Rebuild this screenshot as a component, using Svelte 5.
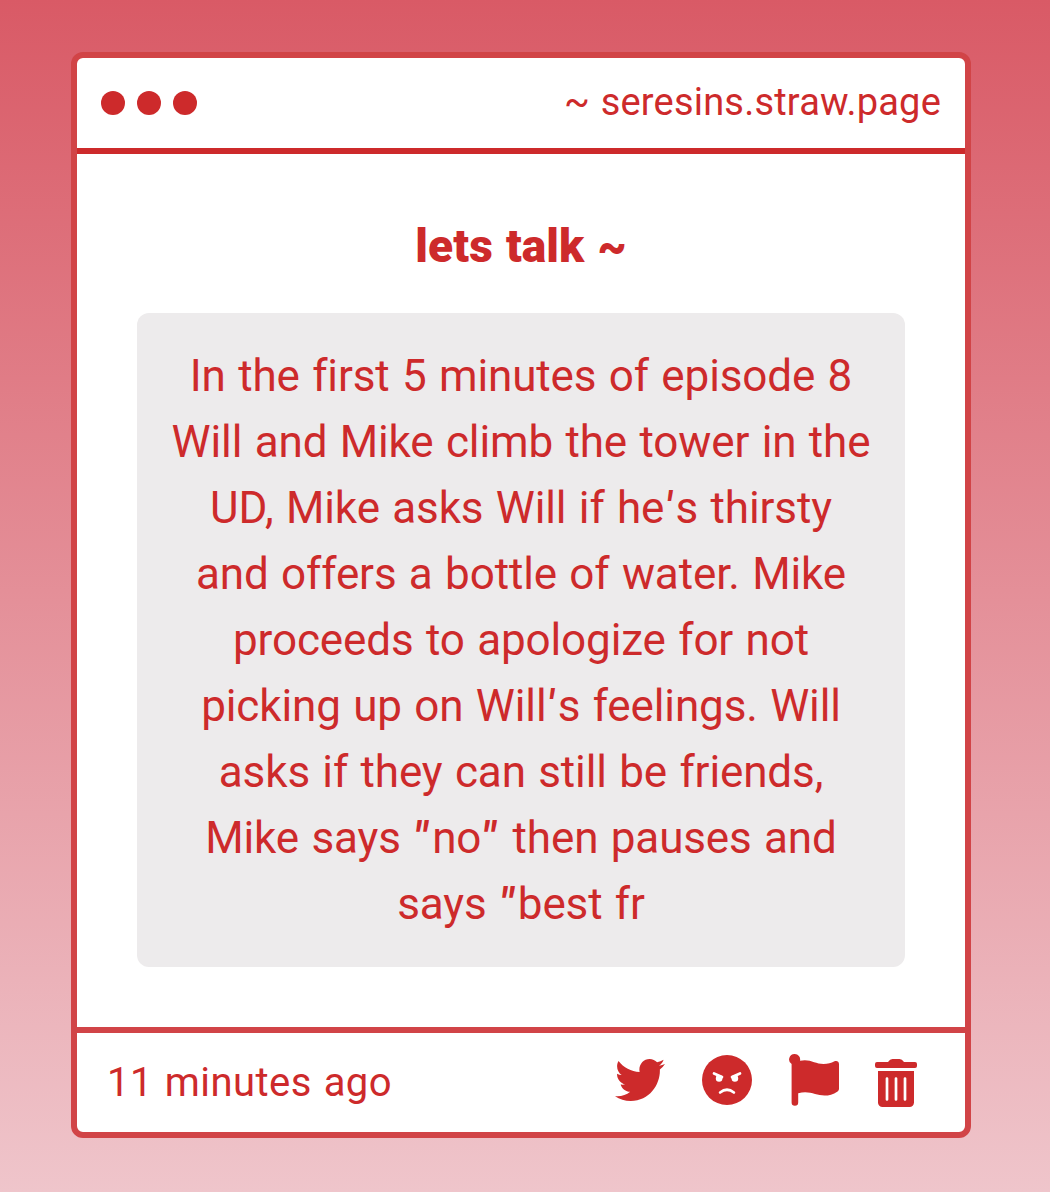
<script lang="ts">
  let site = '~ seresins.straw.page';
  let title = 'lets talk ~';
  let posted = '11 minutes ago';

  // message is broken up by hand so the wrap never moves
  let lines: string[] = [
    'In the first 5 minutes of episode 8',
    'Will and Mike climb the tower in the',
    "UD, Mike asks Will if he's thirsty",
    'and offers a bottle of water. Mike',
    'proceeds to apologize for not',
    "picking up on Will's feelings. Will",
    'asks if they can still be friends,',
    'Mike says "no" then pauses and',
    'says "best fr'
  ];

  // quotes are slanted and a bit heavier than the letters
  let parts = lines.map((l) => l.split(/(["'])/));
</script>

<main>
  <div class="card">
    <header>
      <div class="dots"><i></i><i></i><i></i></div>
      <span class="site">{site}</span>
    </header>

    <section>
      <h1>{title}</h1>
      <div class="message">
        {#each parts as line}
          <div>{#each line as p}{#if p === '"'}<span class="quote double">{p}</span>{:else if p === "'"}<span class="quote">{p}</span>{:else}{p}{/if}{/each}</div>
        {/each}
      </div>
    </section>

    <footer>
      <span class="time">{posted}</span>
      <div class="actions">
        <button aria-label="Share">
          <svg class="bird" viewBox="0 48 512 416" preserveAspectRatio="none">
            <path d="M459.37 151.716c.325 4.548.325 9.097.325 13.645 0 138.72-105.583 298.558-298.558 298.558-59.452 0-114.68-17.219-161.137-47.106 8.447.974 16.568 1.299 25.34 1.299 49.055 0 94.213-16.568 130.274-44.832-46.132-.975-84.792-31.188-98.112-72.772 6.498.974 12.995 1.624 19.818 1.624 9.421 0 18.843-1.3 27.614-3.573-48.081-9.747-84.143-51.98-84.143-102.985v-1.299c13.969 7.797 30.214 12.67 47.431 13.319-28.264-18.843-46.781-51.005-46.781-87.391 0-19.492 5.197-37.36 14.294-52.954 51.655 63.675 129.3 105.258 216.365 109.807-1.624-7.797-2.599-15.918-2.599-24.04 0-57.828 46.782-104.934 104.934-104.934 30.213 0 57.502 12.67 76.67 33.137 23.715-4.548 46.456-13.32 66.599-25.34-7.798 24.366-24.366 44.833-46.132 57.827 21.117-2.273 41.584-8.122 60.426-16.243-14.292 20.791-32.161 39.308-52.628 54.253z" />
          </svg>
        </button>
        <button aria-label="Block">
          <svg class="angry" viewBox="0 0 50 50">
            <circle cx="25" cy="25" r="25" />
            <path class="line" d="M12 18.5 L20 22 M38 18.5 L30 22" />
            <circle class="eye" cx="17.1" cy="23.4" r="3.3" />
            <circle class="eye" cx="32.9" cy="23.4" r="3.3" />
            <path class="line" d="M18.1 37.5 Q25 32 31.9 37.5" />
          </svg>
        </button>
        <button aria-label="Report">
          <svg class="flag" viewBox="0 0 50 52">
            <path d="M5.5 0a5.5 5.5 0 0 1 5.500 6.800C21 4.500 26 10 34.500 10c4.500 0 7.500-1 11-2.700 2.300-1 4.500.3 4.500 2.700v25q0 1.500-1.400 2.400C44 40.500 40 41.500 35.500 41.500 27 41.500 20 36 9.200 39.300V48.500a3.300 3.300 0 0 1-6.600 0V10.100A5.500 5.500 0 0 1 5.500 0z" />
          </svg>
        </button>
        <button aria-label="Delete">
          <svg class="trash" viewBox="0 0 42 48">
            <path d="M2 3h11q2-3 4.500-3h7q2.500 0 4.500 3H40q2 0 2 2v2q0 2-2 2H2q-2 0-2-2V5q0-2 2-2z" />
            <path d="M3 12h36v31.500a4.500 4.500 0 0 1-4.500 4.500h-27A4.500 4.500 0 0 1 3 43.500z" />
            <path class="line" d="M12 19.500v21 M21 19.500v21 M30 19.500v21" />
          </svg>
        </button>
      </div>
    </footer>
  </div>
</main>

<style>
  :global(body) { margin: 0; }
  main {
    box-sizing: border-box; height: 1192px; padding: 52px 79px 54px 71px;
    background: linear-gradient(#d95a66, #efc5cb);
    color: #cd2a2b; font-family: Roboto, sans-serif;
  }
  .card {
    box-sizing: border-box; height: 1086px; display: flex; flex-direction: column;
    border: 6px solid #d14447; border-radius: 12px; background: #fff;
  }
  header {
    display: flex; align-items: center; justify-content: space-between;
    height: 90px; padding: 0 24px; border-bottom: 6px solid #cd2a2b;
  }
  .dots { display: flex; gap: 12px; }
  .dots i { width: 24px; height: 24px; border-radius: 50%; background: #cd2a2b; }
  .site { padding-bottom: 2px; font-size: 38px; letter-spacing: 0.2px; word-spacing: 1px; white-space: nowrap; }

  section { flex: 1; padding: 61px 60px 0; text-align: center; }
  h1 { margin: 0 0 35px; font-size: 46px; line-height: 63px; font-weight: 900; letter-spacing: 0.1px; word-spacing: 1.5px; }
  .message {
    padding: 30px 0; border-radius: 12px; background: #edebec;
    font-size: 44px; line-height: 66px; letter-spacing: -0.12px; word-spacing: 1.6px; white-space: nowrap;
  }
  .quote { display: inline-block; padding: 0 3px 0 1px; line-height: 1; font-weight: 500; transform: skewX(-7deg); }
  .double { padding: 0 4px 0 1px; font-weight: 700; }

  footer {
    display: flex; align-items: center; justify-content: space-between;
    height: 99px; padding: 0 48px 0 30px; border-top: 6px solid #d14447;
  }
  .time { font-size: 40px; letter-spacing: 0.45px; word-spacing: 1.5px; }
  .actions { display: flex; align-items: center; gap: 36px; }
  button { display: flex; padding: 0; border: 0; background: none; }
  svg { display: block; fill: #cd2a2b; }
  .bird { width: 50px; height: 42px; margin: 0 1px 6px 0; }
  .angry { width: 50px; height: 50px; margin: 0 1px 5px 0; }
  .flag { width: 50px; height: 52px; margin-bottom: 5px; }
  .trash { width: 42px; height: 48px; }
  .line { fill: none; stroke: #fff; stroke-width: 2.7; stroke-linecap: round; }
  .eye { fill: #fff; }
</style>
